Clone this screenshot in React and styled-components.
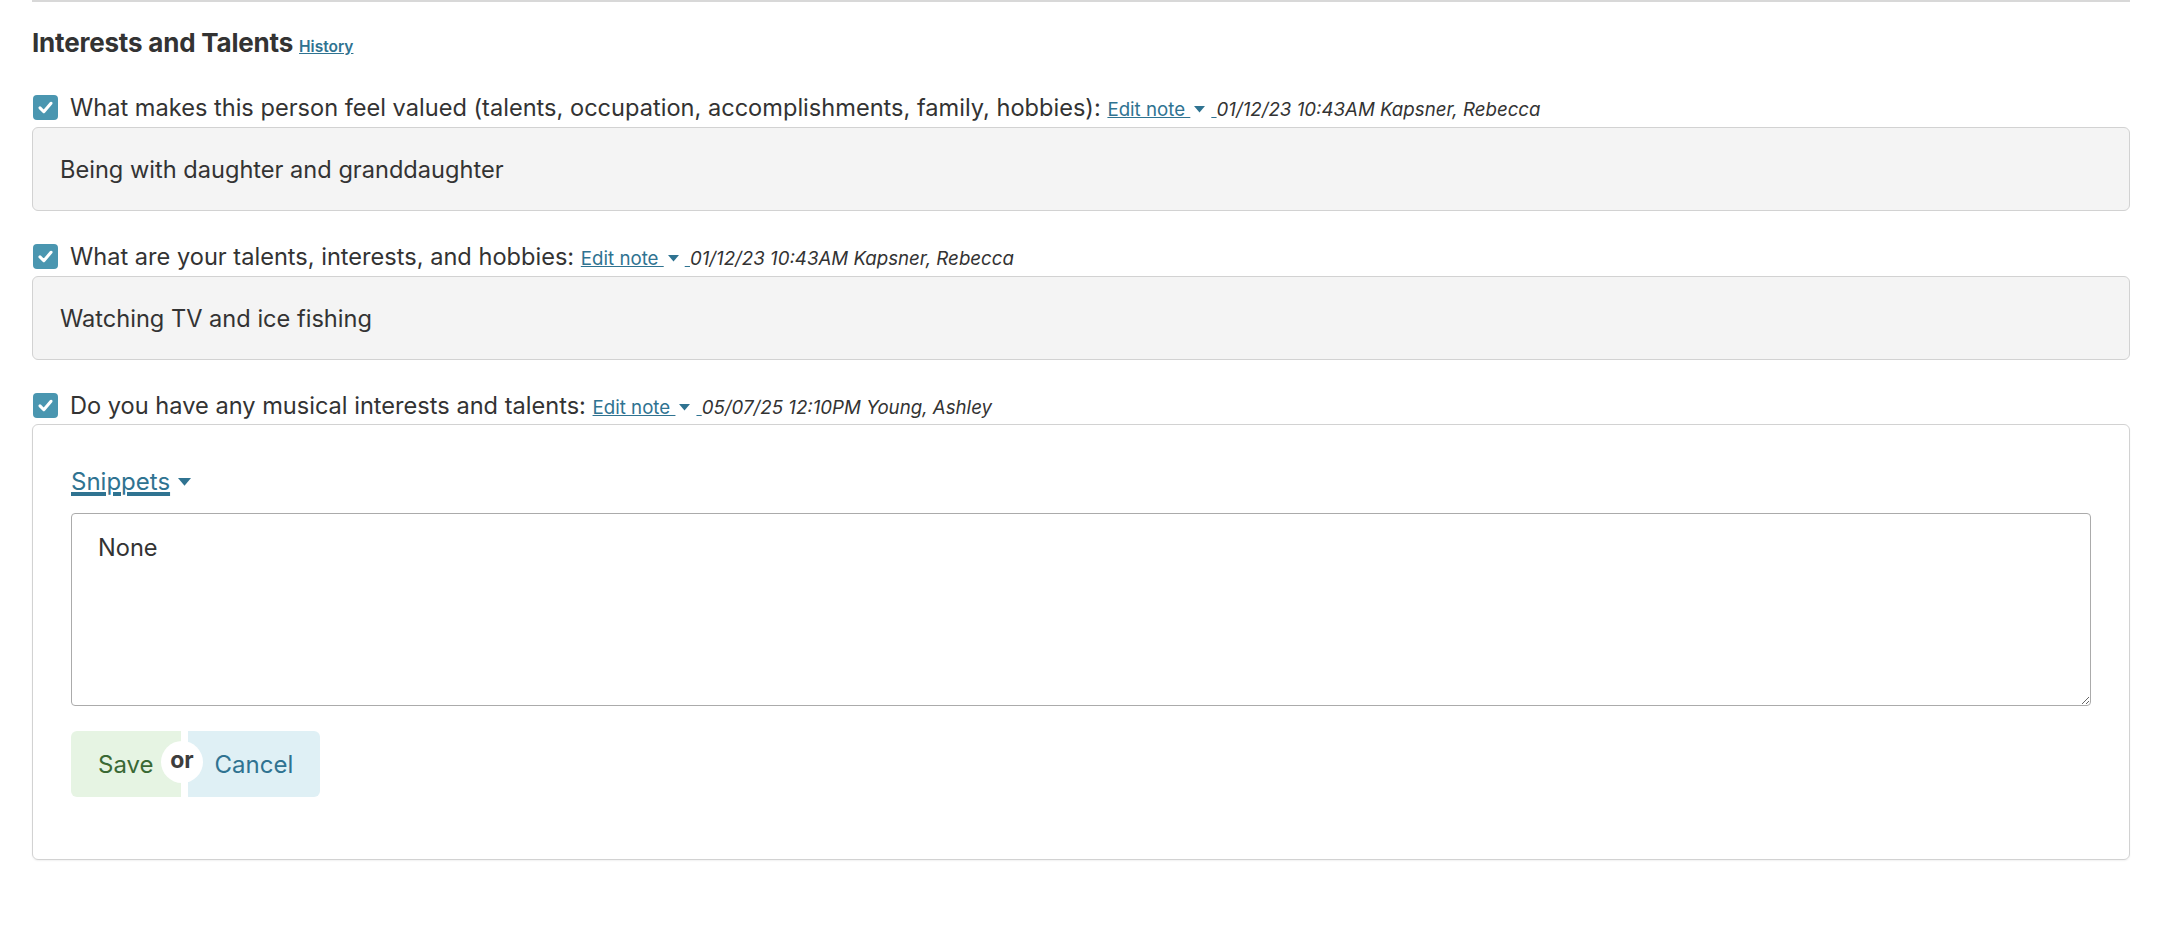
import styled, { createGlobalStyle } from 'styled-components';

const GlobalStyle = createGlobalStyle`
  body {
    margin: 0;
    background: #ffffff;
    font-family: Inter, "Noto Sans", sans-serif;
    color: #333333;
  }
`;

const questions = [
  {
    label: 'What makes this person feel valued (talents, occupation, accomplishments, family, hobbies):',
    stamp: '01/12/23 10:43AM Kapsner, Rebecca',
    answer: 'Being with daughter and granddaughter',
  },
  {
    label: 'What are your talents, interests, and hobbies:',
    stamp: '01/12/23 10:43AM Kapsner, Rebecca',
    answer: 'Watching TV and ice fishing',
  },
  {
    label: 'Do you have any musical interests and talents:',
    stamp: '05/07/25 12:10PM Young, Ashley',
    editing: true,
    answer: 'None',
  },
];

function Caret({ size = 12 }) {
  return (
    <svg width={size} height={size * 0.6} viewBox="0 0 10 6">
      <path d="M0 0 L10 0 L5 6 Z" fill="#2f7391" />
    </svg>
  );
}

function App() {
  return (
    <Page>
      <GlobalStyle />
      <Divider />
      <Heading>
        Interests and Talents <SmallLink href="#">History</SmallLink>
      </Heading>
      {questions.map((q) => (
        <Question key={q.label}>
          <LabelRow>
            <CheckBox>
              <svg width="17" height="17" viewBox="0 0 20 20">
                <path d="M3.5 10.5 L8 15 L16.5 5" fill="none" stroke="#fff" strokeWidth="3.6" strokeLinecap="round" strokeLinejoin="round" />
              </svg>
            </CheckBox>
            <LabelText>
              {q.label}{' '}
              <NoteLink href="#">Edit note </NoteLink>
              <CaretWrap><Caret size={11} /></CaretWrap>
              <NoteLink href="#"> </NoteLink>
              <Stamp>{q.stamp}</Stamp>
            </LabelText>
          </LabelRow>
          {q.editing ? (
            <EditBox>
              <SnippetsLink href="#">
                <span>Snippets</span>
                <Caret size={13} />
              </SnippetsLink>
              <NoteArea defaultValue={q.answer} />
              <Actions>
                <ActionButton $tone="save">Save</ActionButton>
                <OrBadge>or</OrBadge>
                <ActionButton $tone="cancel">Cancel</ActionButton>
              </Actions>
            </EditBox>
          ) : (
            <AnswerBox>{q.answer}</AnswerBox>
          )}
        </Question>
      ))}
    </Page>
  );
}

const Page = styled.div`
  padding: 0 36px 60px 32px;
`;

const Divider = styled.hr`
  margin: 0;
  border: none;
  border-top: 2px solid #d8d8d8;
`;

const Heading = styled.h2`
  margin: 24px 0 0;
  font-size: 26px;
  line-height: 34px;
  font-weight: 700;
  color: #333333;
  letter-spacing: -0.2px;
`;

const SmallLink = styled.a`
  font-size: 15.5px;
  font-weight: 600;
  color: #2f7391;
  text-decoration: underline;
  letter-spacing: 0;
`;

const Question = styled.section`
  margin-top: 28px;

  &:first-of-type {
    margin-top: 26px;
  }
`;

const LabelRow = styled.div`
  display: flex;
  align-items: center;
  gap: 12px;
  height: 34px;
  padding-left: 1px;
`;

const CheckBox = styled.span`
  width: 25px;
  height: 25px;
  border-radius: 4px;
  background: #4a96b0;
  display: flex;
  align-items: center;
  justify-content: center;
  flex-shrink: 0;
`;

const LabelText = styled.div`
  font-size: 23.6px;
  line-height: 34px;
  color: #333333;
  white-space: nowrap;
`;

const NoteLink = styled.a`
  font-size: 18.7px;
  color: #2f7391;
  text-decoration: underline;
  white-space: pre;
`;

const CaretWrap = styled.span`
  display: inline-block;
  margin: 0 6px 0 4px;
  vertical-align: 3px;
`;

const Stamp = styled.em`
  font-size: 18.7px;
  font-style: italic;
  color: #333333;
`;

const AnswerBox = styled.div`
  margin-top: 3px;
  height: 84px;
  box-sizing: border-box;
  display: flex;
  align-items: center;
  padding: 0 27px;
  background: #f4f4f4;
  border: 1px solid #d2d2d2;
  border-radius: 6px;
  font-size: 23.6px;
  color: #333333;
`;

const EditBox = styled.div`
  margin-top: 2px;
  border: 1px solid #d2d2d2;
  border-radius: 6px;
  padding: 40px 38px 62px 38px;
  box-shadow: 0 1px 2px rgba(0, 0, 0, 0.06);
`;

const SnippetsLink = styled.a`
  display: inline-flex;
  align-items: center;
  gap: 8px;
  font-size: 24px;
  line-height: 34px;
  color: #2f7391;
  span {
    text-decoration: underline;
    text-underline-offset: 4px;
  }
`;

const NoteArea = styled.textarea`
  display: block;
  width: 100%;
  box-sizing: border-box;
  height: 193px;
  margin-top: 14px;
  padding: 18px 26px;
  border: 1px solid #ababab;
  border-radius: 4px;
  font-family: Inter, "Noto Sans", sans-serif;
  font-size: 23.6px;
  line-height: 32px;
  color: #333333;
  resize: vertical;
  outline: none;
`;

const Actions = styled.div`
  margin-top: 25px;
  display: flex;
  align-items: center;
  position: relative;
  gap: 7px;
`;

const ActionButton = styled.button`
  height: 66px;
  border: none;
  padding: 0 27px;
  font-family: Inter, "Noto Sans", sans-serif;
  font-size: 24px;
  cursor: pointer;
  background: ${(p) => (p.$tone === 'save' ? '#e6f4e3' : '#dff0f5')};
  color: ${(p) => (p.$tone === 'save' ? '#3a6934' : '#2f7391')};
  border-radius: ${(p) => (p.$tone === 'save' ? '6px 0 0 6px' : '0 6px 6px 0')};
`;

const OrBadge = styled.span`
  position: absolute;
  left: 90px;
  top: 10px;
  width: 42px;
  height: 42px;
  border-radius: 50%;
  background: #ffffff;
  display: flex;
  align-items: center;
  justify-content: center;
  font-size: 23px;
  font-weight: 700;
  color: #3d3d3d;
  padding-bottom: 4px;
  box-sizing: border-box;
`;

export default App;
